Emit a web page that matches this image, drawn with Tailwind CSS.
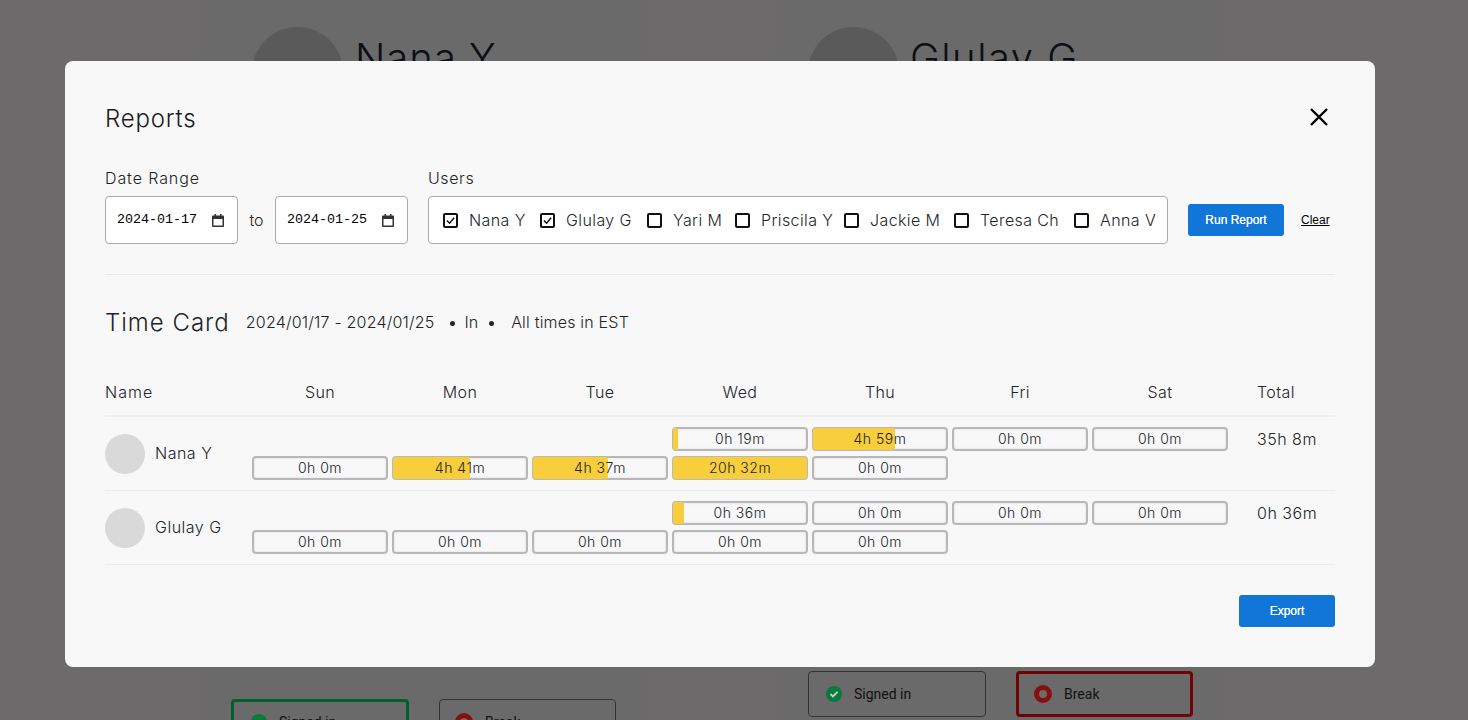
<!DOCTYPE html>
<html lang="en">
  <head>
    <meta charset="UTF-8" />
    <title>Reports</title>
    <script src="https://cdn.jsdelivr.net/npm/@tailwindcss/browser@4"></script>
  </head>
  <body class="relative h-[720px] w-[1468px] overflow-hidden bg-[#6c6a6a] font-['Inter',sans-serif] text-[#212529]">
    <!-- page behind the overlay -->
    <div class="flex h-[720px] gap-[130px] overflow-hidden pl-[201px]">
      <div class="h-[720px] w-[446px] overflow-hidden bg-[#6a6a6a] pt-[27px]">
        <div class="flex items-start gap-[12px] pl-[51px]">
          <div class="size-[91px] shrink-0 rounded-full bg-[#5a5a5a]"></div>
          <div class="mt-[7px] text-[40px] font-light leading-[48px] tracking-[1px] text-[#0d0f14]">Nana Y</div>
        </div>
        <div class="mt-[581px] flex gap-[30px] pl-[30px] font-['Roboto',sans-serif] text-[14px] text-[#111]">
          <div class="flex h-[46px] w-[178px] items-center gap-[12px] rounded-[4px] border-[3px] border-[#00602c] pl-[17px]">
            <span class="size-4 rounded-full bg-[#0b7a3e]"></span>Signed in
          </div>
          <div class="flex h-[46px] w-[177px] items-center gap-[12px] rounded-[4px] border border-[#333] pl-[15px]">
            <span class="size-[18px] rounded-full border-[5px] border-[#860f10]"></span>Break
          </div>
        </div>
      </div>
      <div class="h-[720px] w-[446px] overflow-hidden bg-[#6a6a6a] pt-[27px]">
        <div class="flex items-start gap-[11px] pl-[31px]">
          <div class="size-[91px] shrink-0 rounded-full bg-[#5a5a5a]"></div>
          <div class="mt-[7px] text-[40px] font-light leading-[48px] tracking-[1.5px] text-[#0d0f14]">Glulay G</div>
        </div>
        <div class="mt-[553px] flex gap-[30px] pl-[31px] font-['Roboto',sans-serif] text-[14px] text-[#111]">
          <div class="flex h-[46px] w-[178px] items-center gap-[12px] rounded-[4px] border border-[#333] pl-[17px]">
            <svg class="size-4" viewBox="0 0 16 16"><circle cx="8" cy="8" r="8" fill="#0b7a3e" /><path d="M4.5 8.2l2.4 2.3 4.6-4.6" fill="none" stroke="#cfcfcf" stroke-width="1.8" /></svg>
            Signed in
          </div>
          <div class="flex h-[46px] w-[177px] items-center gap-[12px] rounded-[4px] border-[3px] border-[#6f0405] pl-[15px]">
            <span class="size-[18px] rounded-full border-[5px] border-[#860f10]"></span>Break
          </div>
        </div>
      </div>
    </div>

    <!-- modal -->
    <div class="absolute left-[65px] top-[61px] h-[606px] w-[1310px] rounded-[8px] bg-[#f8f8f8] px-[40px]">
      <div class="flex h-[86px] items-center justify-between pt-[29px]">
        <h2 class="text-[24px] font-light leading-none tracking-[0.8px] text-[#1a1a22]">Reports</h2>
        <svg class="mb-[4px] mr-[6px] size-[20px]" viewBox="0 0 20 20"><path d="M2 2l16 16M18 2L2 18" stroke="#000" stroke-width="2.4" fill="none" /></svg>
      </div>

      <div class="mt-[20px] flex items-end">
        <div>
          <div class="mb-[7px] text-[16px] font-light leading-[22px] tracking-[0.9px]">Date Range</div>
          <div class="flex items-center">
            <div class="flex h-[48px] w-[133px] items-center justify-between rounded-[4px] border border-[#aaa] bg-white px-[11px] pr-[13px] font-['Liberation_Mono',monospace] text-[13.33px] text-black">
              2024-01-17
              <svg class="h-[13px] w-[12px]" viewBox="0 0 12 13"><path d="M0 2.5A1 1 0 0 1 1 1.5h1.5V0H4v1.500h4V0h1.500v1.500H11a1 1 0 0 1 1 1V12a1 1 0 0 1-1 1H1a1 1 0 0 1-1-1z M1.500 5v6.500h9V5z" fill="#333" fill-rule="evenodd" /></svg>
            </div>
            <span class="w-[37px] text-center text-[16px] font-light">to</span>
            <div class="flex h-[48px] w-[133px] items-center justify-between rounded-[4px] border border-[#aaa] bg-white px-[11px] pr-[13px] font-['Liberation_Mono',monospace] text-[13.33px] text-black">
              2024-01-25
              <svg class="h-[13px] w-[12px]" viewBox="0 0 12 13"><path d="M0 2.5A1 1 0 0 1 1 1.5h1.5V0H4v1.500h4V0h1.500v1.500H11a1 1 0 0 1 1 1V12a1 1 0 0 1-1 1H1a1 1 0 0 1-1-1z M1.500 5v6.500h9V5z" fill="#333" fill-rule="evenodd" /></svg>
            </div>
          </div>
        </div>
        <div class="ml-[20px]">
          <div class="mb-[7px] text-[16px] font-light leading-[22px] tracking-[0.6px]">Users</div>
          <div class="flex h-[48px] w-[740px] items-center gap-[14px] whitespace-nowrap rounded-[4px] border border-[#aaa] bg-white pl-[14px] text-[16px] font-light tracking-[0.4px]">
            <label class="flex w-[83px] items-center gap-[11px]"><span class="flex size-[15px] shrink-0 items-center justify-center rounded-[2px] border-2 border-[#111]"><svg class="size-[9px]" viewBox="0 0 10 10"><path d="M1 5l3 3 5-6" fill="none" stroke="#111" stroke-width="1.6" /></svg></span>Nana Y</label>
            <label class="flex w-[93px] items-center gap-[11px]"><span class="flex size-[15px] shrink-0 items-center justify-center rounded-[2px] border-2 border-[#111]"><svg class="size-[9px]" viewBox="0 0 10 10"><path d="M1 5l3 3 5-6" fill="none" stroke="#111" stroke-width="1.6" /></svg></span>Glulay G</label>
            <label class="flex w-[74px] items-center gap-[11px]"><span class="size-[15px] shrink-0 rounded-[2px] border-2 border-[#111]"></span>Yari M</label>
            <label class="flex w-[95px] items-center gap-[11px]"><span class="size-[15px] shrink-0 rounded-[2px] border-2 border-[#111]"></span>Priscila Y</label>
            <label class="flex w-[96px] items-center gap-[11px]"><span class="size-[15px] shrink-0 rounded-[2px] border-2 border-[#111]"></span>Jackie M</label>
            <label class="flex w-[106px] items-center gap-[11px]"><span class="size-[15px] shrink-0 rounded-[2px] border-2 border-[#111]"></span>Teresa Ch</label>
            <label class="flex w-[83px] items-center gap-[11px]"><span class="size-[15px] shrink-0 rounded-[2px] border-2 border-[#111]"></span>Anna V</label>
          </div>
        </div>
        <button class="mb-[8px] ml-[20px] h-[32px] w-[96px] rounded-[3px] bg-[#1275d8] font-['Liberation_Sans',sans-serif] text-[12px] text-white [text-shadow:0_0_0.5px_white]">Run Report</button>
        <a class="mb-[15px] ml-[17px] font-['Liberation_Sans',sans-serif] text-[12px] text-black underline">Clear</a>
      </div>

      <div class="mt-[30px] border-t border-[#e9e9e9]"></div>

      <div class="mt-[33px] flex h-[30px] items-center text-[16px] font-light leading-[30px]">
        <h3 class="text-[24px] font-light tracking-[1px]">Time Card</h3>
        <span class="mb-[2px] ml-[16px] tracking-[0.2px]">2024/01/17 - 2024/01/25</span>
        <span class="ml-[15px] size-[5px] rounded-full bg-[#212529]"></span>
        <span class="mb-[2px] ml-[10px]">In</span>
        <span class="ml-[11px] size-[5px] rounded-full bg-[#212529]"></span>
        <span class="mb-[2px] ml-[17px] tracking-[0.2px]">All times in EST</span>
      </div>

      <div class="mt-[34px] grid h-[45px] grid-cols-[147px_repeat(7,140px)_1fr] items-center border-b-2 border-[#eee] pb-[4px] text-center text-[16px] font-light tracking-[0.4px]">
        <div class="text-left tracking-[1px]">Name</div><div class="pr-[4px]">Sun</div><div class="pr-[4px]">Mon</div><div class="pr-[4px]">Tue</div><div class="pr-[4px]">Wed</div><div class="pr-[4px]">Thu</div><div class="pr-[4px]">Fri</div><div class="pr-[4px]">Sat</div><div class="pl-[25px] text-left">Total</div>
      </div>

      <div class="flex h-[74px] border-b border-[#ececec]">
        <div class="flex w-[147px] items-center gap-[10px] text-[16px] font-light tracking-[0.5px]"><span class="size-[40px] rounded-full bg-[#d9d9d9]"></span><span class="mb-[2px]">Nana Y</span></div>
        <div class="grid flex-1 grid-cols-[repeat(7,140px)_1fr] grid-rows-[29px_29px] pt-[10px] text-[14px] font-light tracking-[0.5px]">
          <div></div><div></div><div></div>
          <div class="pr-[4px]"><div class="relative h-[24px] rounded-[4px] border-2 border-[#b8b8b8] text-center leading-[19px] shadow-[inset_0_0_2px_rgba(0,0,0,0.15)]"><div class="absolute -inset-y-[1px] -left-[1px] w-[4%] rounded-[3px] bg-[#f8ce3c]"></div><span class="relative">0h 19m</span></div></div>
          <div class="pr-[4px]"><div class="relative h-[24px] rounded-[4px] border-2 border-[#b8b8b8] text-center leading-[19px] shadow-[inset_0_0_2px_rgba(0,0,0,0.15)]"><div class="absolute -inset-y-[1px] -left-[1px] w-[62%] rounded-[3px] bg-[#f8ce3c]"></div><span class="relative">4h 59m</span></div></div>
          <div class="pr-[4px]"><div class="h-[24px] rounded-[4px] border-2 border-[#b8b8b8] text-center leading-[19px] shadow-[inset_0_0_2px_rgba(0,0,0,0.15)]">0h 0m</div></div>
          <div class="pr-[4px]"><div class="h-[24px] rounded-[4px] border-2 border-[#b8b8b8] text-center leading-[19px] shadow-[inset_0_0_2px_rgba(0,0,0,0.15)]">0h 0m</div></div>
          <div class="row-span-2 pl-[25px] text-[16px] leading-[24px]">35h 8m</div>
          <div class="pr-[4px]"><div class="h-[24px] rounded-[4px] border-2 border-[#b8b8b8] text-center leading-[19px] shadow-[inset_0_0_2px_rgba(0,0,0,0.15)]">0h 0m</div></div>
          <div class="pr-[4px]"><div class="relative h-[24px] rounded-[4px] border-2 border-[#b8b8b8] text-center leading-[19px] shadow-[inset_0_0_2px_rgba(0,0,0,0.15)]"><div class="absolute -inset-y-[1px] -left-[1px] w-[58%] rounded-[3px] bg-[#f8ce3c]"></div><span class="relative">4h 41m</span></div></div>
          <div class="pr-[4px]"><div class="relative h-[24px] rounded-[4px] border-2 border-[#b8b8b8] text-center leading-[19px] shadow-[inset_0_0_2px_rgba(0,0,0,0.15)]"><div class="absolute -inset-y-[1px] -left-[1px] w-[57%] rounded-[3px] bg-[#f8ce3c]"></div><span class="relative">4h 37m</span></div></div>
          <div class="pr-[4px]"><div class="relative h-[24px] rounded-[4px] border-2 border-[#b8b8b8] text-center leading-[19px] shadow-[inset_0_0_2px_rgba(0,0,0,0.15)]"><div class="absolute -inset-[1px] rounded-[3px] bg-[#f8ce3c]"></div><span class="relative">20h 32m</span></div></div>
          <div class="pr-[4px]"><div class="h-[24px] rounded-[4px] border-2 border-[#b8b8b8] text-center leading-[19px] shadow-[inset_0_0_2px_rgba(0,0,0,0.15)]">0h 0m</div></div>
        </div>
      </div>

      <div class="flex h-[74px] border-b border-[#ececec]">
        <div class="flex w-[147px] items-center gap-[10px] text-[16px] font-light tracking-[0.5px]"><span class="size-[40px] rounded-full bg-[#d9d9d9]"></span><span class="mb-[2px]">Glulay G</span></div>
        <div class="grid flex-1 grid-cols-[repeat(7,140px)_1fr] grid-rows-[29px_29px] pt-[10px] text-[14px] font-light tracking-[0.5px]">
          <div></div><div></div><div></div>
          <div class="pr-[4px]"><div class="relative h-[24px] rounded-[4px] border-2 border-[#b8b8b8] text-center leading-[19px] shadow-[inset_0_0_2px_rgba(0,0,0,0.15)]"><div class="absolute -inset-y-[1px] -left-[1px] w-[8%] rounded-[3px] bg-[#f8ce3c]"></div><span class="relative">0h 36m</span></div></div>
          <div class="pr-[4px]"><div class="h-[24px] rounded-[4px] border-2 border-[#b8b8b8] text-center leading-[19px] shadow-[inset_0_0_2px_rgba(0,0,0,0.15)]">0h 0m</div></div>
          <div class="pr-[4px]"><div class="h-[24px] rounded-[4px] border-2 border-[#b8b8b8] text-center leading-[19px] shadow-[inset_0_0_2px_rgba(0,0,0,0.15)]">0h 0m</div></div>
          <div class="pr-[4px]"><div class="h-[24px] rounded-[4px] border-2 border-[#b8b8b8] text-center leading-[19px] shadow-[inset_0_0_2px_rgba(0,0,0,0.15)]">0h 0m</div></div>
          <div class="row-span-2 pl-[25px] text-[16px] leading-[24px]">0h 36m</div>
          <div class="pr-[4px]"><div class="h-[24px] rounded-[4px] border-2 border-[#b8b8b8] text-center leading-[19px] shadow-[inset_0_0_2px_rgba(0,0,0,0.15)]">0h 0m</div></div>
          <div class="pr-[4px]"><div class="h-[24px] rounded-[4px] border-2 border-[#b8b8b8] text-center leading-[19px] shadow-[inset_0_0_2px_rgba(0,0,0,0.15)]">0h 0m</div></div>
          <div class="pr-[4px]"><div class="h-[24px] rounded-[4px] border-2 border-[#b8b8b8] text-center leading-[19px] shadow-[inset_0_0_2px_rgba(0,0,0,0.15)]">0h 0m</div></div>
          <div class="pr-[4px]"><div class="h-[24px] rounded-[4px] border-2 border-[#b8b8b8] text-center leading-[19px] shadow-[inset_0_0_2px_rgba(0,0,0,0.15)]">0h 0m</div></div>
          <div class="pr-[4px]"><div class="h-[24px] rounded-[4px] border-2 border-[#b8b8b8] text-center leading-[19px] shadow-[inset_0_0_2px_rgba(0,0,0,0.15)]">0h 0m</div></div>
        </div>
      </div>

      <div class="mt-[30px] flex justify-end">
        <button class="h-[32px] w-[96px] rounded-[3px] bg-[#1275d8] font-['Liberation_Sans',sans-serif] text-[12px] text-white [text-shadow:0_0_0.5px_white]">Export</button>
      </div>
    </div>
  </body>
</html>
